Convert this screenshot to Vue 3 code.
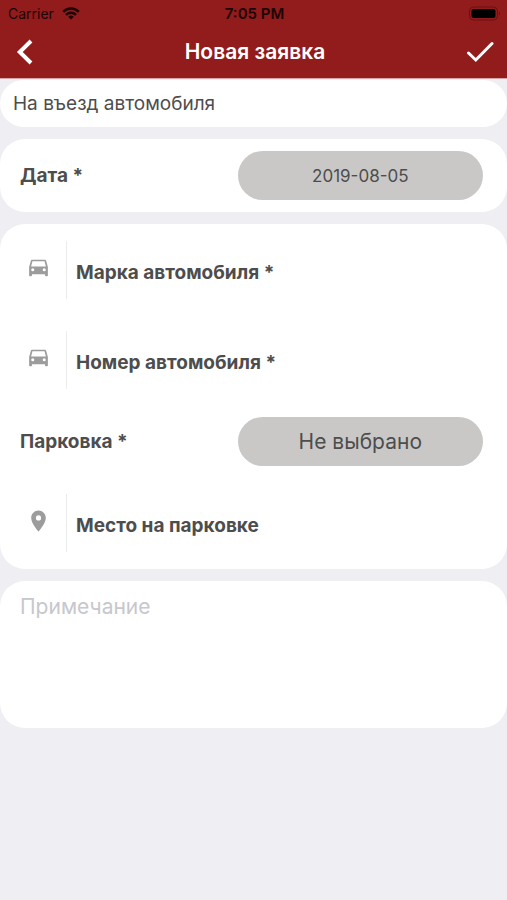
<script setup>
import { ref } from 'vue'

const requestType = ref('entry')
const date = ref('2019-08-05')
const parking = ref('')
const place = ref('')
const note = ref('')
const carFields = ref([
  { name: 'Марка автомобиля', value: '' },
  { name: 'Номер автомобиля', value: '' },
])
</script>

<template>
  <div class="screen">
    <header class="header">
      <div class="status">
        <div class="carrier">
          <span>Carrier</span>
          <svg class="wifi" viewBox="0 0 18 13" aria-hidden="true">
            <path d="M1.2 4.8a11 11 0 0 1 15.6 0" />
            <path d="M4 7.900a7 7 0 0 1 10 0" />
            <path class="dot" d="M9 12.6 6.2 9.8a4 4 0 0 1 5.6 0z" />
          </svg>
        </div>
        <span class="time">7:05 PM</span>
        <svg class="battery" viewBox="0 0 32 16" aria-hidden="true">
          <rect class="shell" x="0.500" y="1" width="28" height="13" rx="4" />
          <rect x="2.500" y="3" width="24" height="9" rx="2" />
          <path class="cap" d="M30 5.500q2 2 0 4z" />
        </svg>
      </div>
      <div class="nav">
        <button class="nav-button" type="button" aria-label="Назад">
          <svg class="back" viewBox="0 0 18 26" aria-hidden="true">
            <path d="M15 2 3.800 13l11.200 11" />
          </svg>
        </button>
        <h1 class="title">Новая заявка</h1>
        <button class="nav-button" type="button" aria-label="Готово">
          <svg class="check" viewBox="0 0 28 22" aria-hidden="true">
            <path d="M2.500 12 9.800 19 26 2.500" />
          </svg>
        </button>
      </div>
    </header>

    <main class="form">
      <section class="card type-card">
        <select v-model="requestType" class="type-select" aria-label="Тип заявки">
          <option value="entry">На въезд автомобиля</option>
        </select>
      </section>

      <section class="card date-card">
        <div class="choice">
          <label class="label" for="date">Дата *</label>
          <button id="date" class="pill" type="button">{{ date }}</button>
        </div>
      </section>

      <section class="card car-card">
        <div class="car-fields">
          <div v-for="field in carFields" :key="field.name" class="field">
            <svg class="icon" viewBox="0 0 24 24" aria-hidden="true">
              <path d="M19.400 5.200C19.200 4.500 18.700 4 17.900 4H6.100c-.8 0-1.300.5-1.500 1.200L3 11v8.200c0 .5.300.8.800.8h1.100c.5 0 .8-.3.800-.8V18h12.600v1.200c0 .5.300.8.800.8h1.100c.5 0 .8-.3.800-.8V11zM6.500 15.200a1.500 1.500 0 0 1 0-3 1.500 1.500 0 0 1 0 3zm11 0a1.500 1.500 0 0 1 0-3 1.500 1.500 0 0 1 0 3zM4.900 10.500l1.300-5.100h11.600l1.300 5.100z" />
            </svg>
            <input v-model="field.value" class="input" type="text" :aria-label="field.name" :placeholder="field.name + ' *'" />
          </div>
        </div>
        <div class="choice">
          <label class="label" for="parking">Парковка *</label>
          <select id="parking" v-model="parking" class="pill large">
            <option value="">Не выбрано</option>
          </select>
        </div>
        <div class="field">
          <svg class="icon" viewBox="0 0 24 24" aria-hidden="true">
            <path d="M12 2C8.130 2 5 5.130 5 9c0 5.250 7 13 7 13s7-7.750 7-13c0-3.870-3.130-7-7-7zm0 9.500a2.500 2.500 0 0 1 0-5 2.500 2.500 0 0 1 0 5z" />
          </svg>
          <input v-model="place" class="input" type="text" aria-label="Место на парковке" placeholder="Место на парковке" />
        </div>
      </section>

      <section class="card note-card">
        <textarea v-model="note" class="note" aria-label="Примечание" placeholder="Примечание"></textarea>
      </section>
    </main>
  </div>
</template>

<style>
body {
  background: #eeeef3;
}
</style>

<style scoped>
.screen {
  min-height: 100vh;
  background: #eeeef3;
  color: #4d4d4d;
  font-family: Inter, "Liberation Sans", sans-serif;
}

.screen * {
  box-sizing: border-box;
}

button,
input,
select,
textarea {
  margin: 0;
  padding: 0;
  border: 0;
  background: none;
  color: inherit;
  font: inherit;
  appearance: none;
  outline: none;
}

.header {
  background: #921b1c;
  border-bottom: 1px solid #d9a5a6;
}

.status {
  display: grid;
  grid-template-columns: 1fr auto 1fr;
  align-items: center;
  height: 27px;
  padding: 0 6px 0 8px;
  color: #1c0505;
  font-size: 14px;
  line-height: 20px;
}

.carrier {
  display: flex;
  align-items: center;
  gap: 8px;
}

.wifi {
  width: 18px;
  height: 13px;
  fill: none;
  stroke: #1c0505;
  stroke-width: 2.4;
}

.wifi .dot {
  fill: #1c0505;
  stroke: none;
}

.time {
  font-size: 15px;
  font-weight: 600;
}

.battery {
  justify-self: end;
  width: 32px;
  height: 16px;
  fill: #000;
}

.battery .shell {
  fill: none;
  stroke: #6a1011;
}

.battery .cap {
  fill: #6a1011;
}

.nav {
  display: flex;
  align-items: center;
  justify-content: space-between;
  height: 51px;
  padding: 0 13px 2px 16px;
}

.nav-button {
  display: flex;
  width: 28px;
  height: 40px;
  align-items: center;
}

.nav svg {
  fill: none;
  stroke: #fff;
}

.back {
  width: 18px;
  height: 26px;
  stroke-width: 4;
}

.check {
  width: 28px;
  height: 22px;
  stroke-width: 3;
  stroke-linecap: round;
}

.title {
  margin: 0;
  color: #fff;
  font-size: 21px;
  font-weight: 600;
  line-height: 24px;
}

.form {
  display: flex;
  flex-direction: column;
  gap: 12px;
  padding-top: 1px;
}

.card {
  background: #fff;
  border-radius: 25px;
}

.type-card {
  padding: 0 13px;
}

.type-select {
  display: block;
  width: 100%;
  height: 47px;
  font-size: 19px;
}

.date-card {
  padding: 12px 0;
}

.choice {
  display: grid;
  grid-template-columns: 47% 53%;
  align-items: center;
  padding: 0 24px 0 20px;
}

.label {
  font-size: 19px;
  font-weight: 700;
  line-height: 24px;
}

.pill {
  width: 100%;
  height: 49px;
  border-radius: 25px;
  background: #c9c8c7;
  font-size: 17px;
  text-align: center;
  text-align-last: center;
}

.large {
  font-size: 21px;
}

.car-card {
  display: flex;
  flex-direction: column;
  gap: 28px;
  padding: 17px 0;
}

.car-fields {
  display: grid;
  gap: 32px;
}

.field {
  display: flex;
  padding-left: 26px;
}

.icon {
  flex: none;
  width: 25px;
  height: 54px;
  margin-right: 15px;
  fill: #9c9c9c;
}

.input {
  flex: 1;
  min-width: 0;
  height: 58px;
  padding: 4px 20px 0 9px;
  border-left: 1px solid #ececec;
  font-size: 19px;
  font-weight: 700;
}

.input::placeholder {
  color: #4d4d4d;
  opacity: 1;
}

.note-card {
  display: flex;
}

.note {
  width: 100%;
  height: 147px;
  padding: 12px 20px;
  font-size: 21px;
  line-height: 28px;
  resize: none;
}

.note::placeholder {
  color: #c7c7cc;
  opacity: 1;
}
</style>
